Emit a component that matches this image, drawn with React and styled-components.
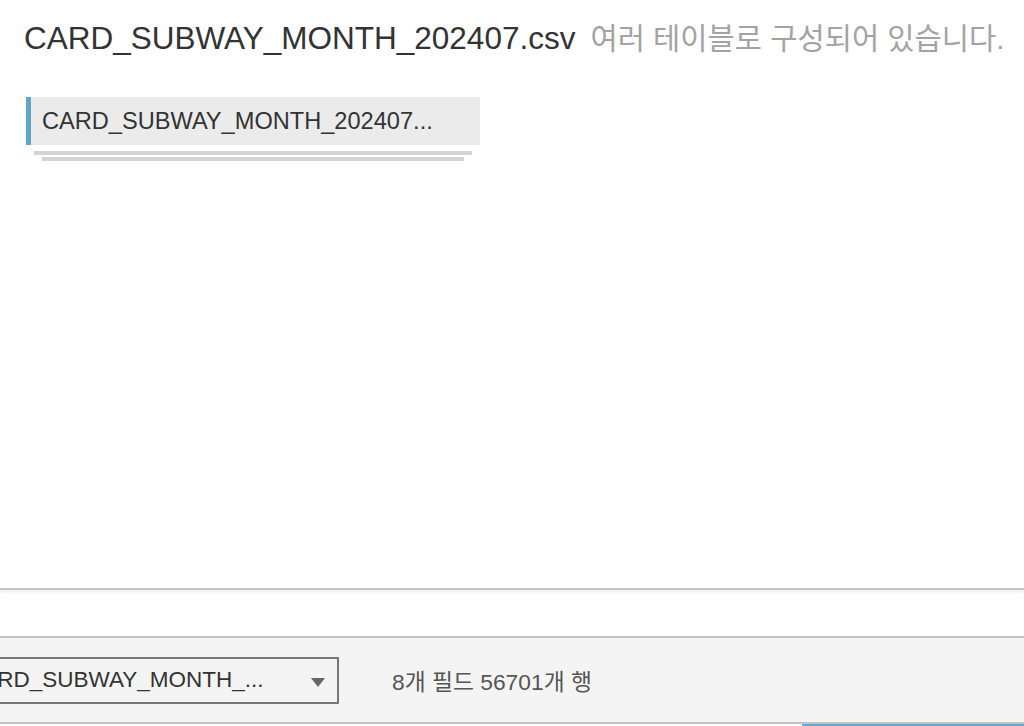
import styled, { createGlobalStyle } from "styled-components"

const GlobalStyle = createGlobalStyle`
  html, body {
    margin: 0;
    padding: 0;
    background: #ffffff;
    overflow: hidden;
  }
  body {
    font-family: "Liberation Sans", "Noto Sans CJK KR", sans-serif;
    color: #333333;
  }
`

const Page = styled.div`
  width: 1024px;
  height: 726px;
  display: flex;
  flex-direction: column;
  overflow: hidden;
`

const Canvas = styled.section`
  border-bottom: 2px solid #c6c6c6;
  box-shadow: 0 2px 3px rgba(0, 0, 0, 0.08);
  padding: 20px 0 0 24px;
  box-sizing: content-box;
  height: 568px;
`

const Title = styled.h1`
  margin: 0;
  display: flex;
  align-items: baseline;
  font-weight: normal;
  line-height: 36px;
  white-space: nowrap;
`

const FileName = styled.span`
  font-size: 31.5px;
  color: #333333;
`

const Note = styled.span`
  margin-left: 15px;
  font-size: 29.6px;
  color: #a3a3a3;
`

const TableStack = styled.div`
  margin-top: 40px;
  margin-left: 2px;
  width: 454px;
`

const TableChip = styled.div`
  height: 48px;
  display: flex;
  align-items: center;
  box-sizing: border-box;
  padding-left: 11px;
  background: #ebebeb;
  border-left: 5px solid #62a6c9;
  font-size: 23.6px;
  color: #333333;
`

const StackLine = styled.div`
  height: 4px;
  margin: ${(p) => (p.$first ? "6px" : "2px")} ${(p) => p.$inset}px 0;
  background: #d4d4d4;
`

const Gap = styled.div`
  height: 46px;
`

const InfoBar = styled.footer`
  height: 84px;
  display: flex;
  align-items: center;
  background: #f4f4f4;
  border-top: 2px solid #c2c2c2;
  border-bottom: 2px solid #c2c2c2;
`

const Select = styled.div`
  margin-left: -48px;
  width: 387px;
  height: 47px;
  box-sizing: border-box;
  display: flex;
  align-items: center;
  justify-content: space-between;
  padding: 0 12px;
  border: 2px solid #777777;
  border-radius: 1px;
  background: #f4f4f4;
  font-size: 22.5px;
  color: #333333;
  white-space: nowrap;
`

const Caret = styled.span`
  width: 0;
  height: 0;
  border-left: 7px solid transparent;
  border-right: 7px solid transparent;
  border-top: 9px solid #666666;
  margin-top: 4px;
`

const Stats = styled.span`
  margin-left: 53px;
  font-size: 22.8px;
  color: #555555;
`

const BottomEdge = styled.div`
  height: 2px;
  display: flex;
  justify-content: flex-end;
`

const ButtonTop = styled.div`
  width: 222px;
  background: #6aa7c9;
`

export default function App() {
  return (
    <Page>
      <GlobalStyle />
      <Canvas>
        <Title>
          <FileName>CARD_SUBWAY_MONTH_202407.csv</FileName>
          <Note>여러 테이블로 구성되어 있습니다.</Note>
        </Title>
        <TableStack>
          <TableChip>CARD_SUBWAY_MONTH_202407...</TableChip>
          <StackLine $first $inset={8} />
          <StackLine $inset={16} />
        </TableStack>
      </Canvas>
      <Gap />
      <InfoBar>
        <Select>
          <span>CARD_SUBWAY_MONTH_...</span>
          <Caret />
        </Select>
        <Stats>8개 필드 56701개 행</Stats>
      </InfoBar>
      <BottomEdge>
        <ButtonTop />
      </BottomEdge>
    </Page>
  )
}
